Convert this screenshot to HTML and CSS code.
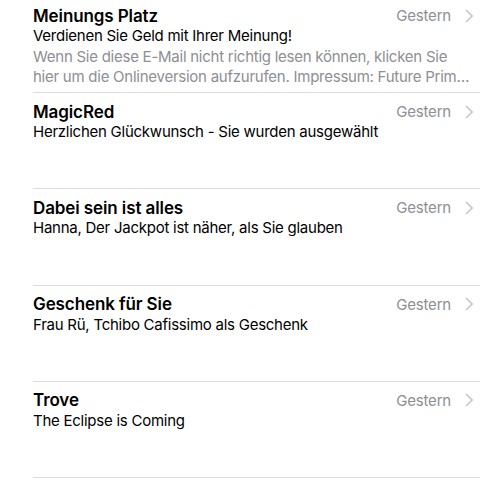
FILE: index.html
```html
<!DOCTYPE html>
<html lang="de">
<head>
<meta charset="utf-8">
<link rel="stylesheet" href="styles.css">
</head>
<body>
<div class="list">
  <div class="row">
    <div class="head"><span class="title">Meinungs Platz</span><span class="date">Gestern</span><svg class="chev" viewBox="0 0 8 14"><polyline points="1,1 7,7 1,13"/></svg></div>
    <div class="subject">Verdienen Sie Geld mit Ihrer Meinung!</div>
    <div class="preview">Wenn Sie diese E-Mail nicht richtig lesen können, klicken Sie hier um die Onlineversion aufzurufen. Impressum: Future Prim…</div>
  </div>
  <div class="row">
    <div class="head"><span class="title">MagicRed</span><span class="date">Gestern</span><svg class="chev" viewBox="0 0 8 14"><polyline points="1,1 7,7 1,13"/></svg></div>
    <div class="subject">Herzlichen Glückwunsch - Sie wurden ausgewählt</div>
    <div class="preview"></div>
  </div>
  <div class="row">
    <div class="head"><span class="title">Dabei sein ist alles</span><span class="date">Gestern</span><svg class="chev" viewBox="0 0 8 14"><polyline points="1,1 7,7 1,13"/></svg></div>
    <div class="subject">Hanna, Der Jackpot ist näher, als Sie glauben</div>
    <div class="preview"></div>
  </div>
  <div class="row">
    <div class="head"><span class="title">Geschenk für Sie</span><span class="date">Gestern</span><svg class="chev" viewBox="0 0 8 14"><polyline points="1,1 7,7 1,13"/></svg></div>
    <div class="subject">Frau Rü, Tchibo Cafissimo als Geschenk</div>
    <div class="preview"></div>
  </div>
  <div class="row">
    <div class="head"><span class="title">Trove</span><span class="date">Gestern</span><svg class="chev" viewBox="0 0 8 14"><polyline points="1,1 7,7 1,13"/></svg></div>
    <div class="subject">The Eclipse is Coming</div>
    <div class="preview"></div>
  </div>
</div>
</body>
</html>
```

FILE: styles.css
```css
html, body {
  margin: 0;
  padding: 0;
  background: #ffffff;
}
body {
  font-family: Inter, "Noto Sans", "Liberation Sans", sans-serif;
  color: #000;
  overflow: hidden;
}
.list {
  margin-top: -3px;
  padding-left: 33px;
}
.row {
  height: 96.2px;
  box-sizing: border-box;
  padding: 8px 0 0 0;
  border-bottom: 1px solid #dcdcdf;
  display: flex;
  flex-direction: column;
  overflow: hidden;
}
.head {
  display: flex;
  align-items: center;
  height: 21px;
  padding-right: 7px;
}
.title {
  flex: 1;
  font-size: 17px;
  font-weight: 600;
  letter-spacing: -0.1px;
}
.date {
  font-size: 15px;
  color: #8e8e93;
  letter-spacing: -0.2px;
  margin-right: 14px;
}
.chev {
  width: 8px;
  height: 14px;
  fill: none;
  stroke: #c7c7cc;
  stroke-width: 1.6;
}
.subject {
  font-size: 15px;
  line-height: 20.5px;
  letter-spacing: -0.25px;
}
.preview {
  font-size: 15px;
  line-height: 20.5px;
  letter-spacing: -0.25px;
  color: #8e8e93;
  margin-right: 4px;
  height: 41px;
  overflow: hidden;
}
```
